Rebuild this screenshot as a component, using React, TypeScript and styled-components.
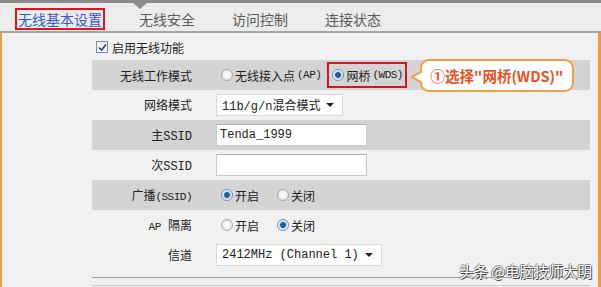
import React from 'react';
import styled, { createGlobalStyle } from 'styled-components';

const GlobalStyle = createGlobalStyle`
  html, body {
    margin: 0;
    padding: 0;
    background: #f1f1f1;
    overflow: hidden;
  }
`;

const Page = styled.div`
  position: relative;
  width: 601px;
  height: 287px;
  background: #f1f1f1;
  font-family: "Liberation Mono", "Noto Sans CJK SC", monospace;
  font-size: 12px;
  color: #222;
  overflow: hidden;
`;

const TopBar = styled.div`
  position: relative;
  height: 3px;
  background: #8c8c8c;

  &::after {
    content: '';
    position: absolute;
    left: 133px;
    top: 3px;
    border-left: 7px solid transparent;
    border-right: 7px solid transparent;
    border-top: 6px solid #8c8c8c;
  }
`;

const TabBar = styled.div`
  display: flex;
  align-items: center;
  gap: 31px;
  height: 28px;
  padding-left: 15px;
  background: #ececec;
  border-bottom: 2px solid #a6a6a6;
  font-family: "Noto Sans CJK SC", sans-serif;
  font-size: 14px;
`;

const Tab = styled.div<{ $active?: boolean }>`
  height: 18px;
  line-height: 18px;
  padding: 0 1px;
  margin-top: 3px;
  color: ${(p) => (p.$active ? '#3558d0' : '#5a5a5a')};
  border: 2px solid ${(p) => (p.$active ? '#e0141c' : 'transparent')};
`;

const Body = styled.div`
  height: 254px;
  border-left: 2px solid #e8a23a;
  border-right: 3px solid #ec9a3a;
  padding: 0 8px 0 90px;
`;

const CheckRow = styled.label`
  display: flex;
  align-items: center;
  gap: 4px;
  height: 27px;
  padding-left: 4px;
  padding-top: 1px;
  box-sizing: border-box;
  font-family: "Noto Sans CJK SC", sans-serif;
`;

const CheckBox = styled.span`
  display: inline-flex;
  align-items: center;
  justify-content: center;
  width: 10px;
  height: 10px;
  border: 1px solid #7d8ba5;
  background: linear-gradient(#e6eaf2, #ffffff);
`;

const Row = styled.div<{ $shade?: boolean }>`
  position: relative;
  display: grid;
  grid-template-columns: 100px 1fr;
  column-gap: 24px;
  align-items: center;
  height: 30px;
  background: ${(p) => (p.$shade ? '#d4d4d4' : 'transparent')};
`;

const Label = styled.div<{ $cjk?: boolean }>`
  text-align: right;
  white-space: nowrap;
  font-family: ${(p) => (p.$cjk ? '"Noto Sans CJK SC", sans-serif' : 'inherit')};
`;

const Small = styled.span`
  font-family: "Liberation Mono", monospace;
  font-size: 11px;
  letter-spacing: -0.5px;
`;

const Value = styled.div`
  display: flex;
  align-items: center;
`;

const Choice = styled.span<{ $gap?: number }>`
  display: inline-flex;
  align-items: center;
  gap: 2px;
  margin-left: ${(p) => p.$gap ?? 5}px;
  font-family: "Noto Sans CJK SC", sans-serif;
  white-space: nowrap;
`;

const Radio = styled.span<{ $checked?: boolean }>`
  box-sizing: border-box;
  width: 12px;
  height: 12px;
  border-radius: 50%;
  border: 1px solid ${(p) => (p.$checked ? '#6f8fb0' : '#a9a9a9')};
  background: ${(p) =>
    p.$checked
      ? 'radial-gradient(circle, #1c5f9e 0 2.5px, #7fb0dc 3px, #eaf2fa 4px)'
      : 'radial-gradient(circle, #fbfbfb 0 2px, #e4e4e4 5px)'};
`;

const Marked = styled.span`
  display: inline-flex;
  align-items: center;
  gap: 2px;
  height: 22px;
  padding: 0 2px 0 3px;
  margin-left: 6px;
  border: 2px solid #d8141c;
  font-family: "Noto Sans CJK SC", sans-serif;
  white-space: nowrap;
`;

const Callout = styled.div`
  position: relative;
  margin: -4px 0 -4px 13px;
  height: 33px;
  width: 154px;
  box-sizing: border-box;
  display: flex;
  align-items: center;
  justify-content: center;
  border: 2px solid #f0a040;
  border-radius: 9px;
  background: #fff;
  color: #e8521e;
  font-family: "Noto Sans CJK SC", sans-serif;
  font-weight: 700;
  font-size: 14.5px;
  white-space: nowrap;

  &::before {
    content: '';
    position: absolute;
    left: -12px;
    top: 9px;
    border-top: 7px solid transparent;
    border-bottom: 7px solid transparent;
    border-right: 12px solid #f0a040;
  }
  &::after {
    content: '';
    position: absolute;
    left: -8px;
    top: 11px;
    border-top: 5px solid transparent;
    border-bottom: 5px solid transparent;
    border-right: 9px solid #fff;
  }
`;

const Select = styled.div<{ $width: number }>`
  box-sizing: border-box;
  display: flex;
  align-items: center;
  justify-content: space-between;
  width: ${(p) => p.$width}px;
  height: 22px;
  padding: 0 8px 0 5px;
  background: #fff;
  border: 1px solid #d9d9d9;
  white-space: nowrap;

  &::after {
    content: '';
    border-left: 4px solid transparent;
    border-right: 4px solid transparent;
    border-top: 4px solid #222;
  }
`;

const Input = styled.div`
  box-sizing: border-box;
  width: 151px;
  height: 22px;
  line-height: 20px;
  padding: 0 3px;
  background: #fff;
  border: 1px solid #c8c8c8;
  border-top-color: #b0b0b0;
`;

const Divider = styled.div<{ $tone: string }>`
  margin-top: 7px;
  height: 1px;
  background: ${(p) => p.$tone};
`;

const Watermark = styled.div`
  position: absolute;
  right: 9px;
  bottom: 6px;
  font-family: "Noto Sans CJK SC", sans-serif;
  font-size: 14.5px;
  color: #fff;
  text-shadow: 1px 1px 0 #444, -1px 0 0 #777, 0 -1px 0 #888;
  white-space: nowrap;
`;

const Check = () => (
  <svg width="9" height="9" viewBox="0 0 9 9">
    <path d="M1 4.5 L3.5 7 L8 1.5" fill="none" stroke="#2a3f7a" strokeWidth="1.6" />
  </svg>
);

export default function App() {
  return (
    <Page>
      <GlobalStyle />
      <TopBar />
      <TabBar>
        <Tab $active>无线基本设置</Tab>
        <Tab>无线安全</Tab>
        <Tab>访问控制</Tab>
        <Tab>连接状态</Tab>
      </TabBar>
      <Body>
        <CheckRow>
          <CheckBox>
            <Check />
          </CheckBox>
          启用无线功能
        </CheckRow>
        <Row $shade>
          <Label $cjk>无线工作模式</Label>
          <Value>
            <Choice>
              <Radio />
              无线接入点<Small>(AP)</Small>
            </Choice>
            <Marked>
              <Radio $checked />
              网桥<Small>(WDS)</Small>
            </Marked>
            <Callout>①选择"网桥(WDS)"</Callout>
          </Value>
        </Row>
        <Row>
          <Label>网络模式</Label>
          <Value>
            <Select $width={127}>11b/g/n混合模式</Select>
          </Value>
        </Row>
        <Row $shade>
          <Label>主SSID</Label>
          <Value>
            <Input>Tenda_1999</Input>
          </Value>
        </Row>
        <Row>
          <Label>次SSID</Label>
          <Value>
            <Input />
          </Value>
        </Row>
        <Row $shade>
          <Label>
            广播<Small>(SSID)</Small>
          </Label>
          <Value>
            <Choice>
              <Radio $checked />
              开启
            </Choice>
            <Choice $gap={18}>
              <Radio />
              关闭
            </Choice>
          </Value>
        </Row>
        <Row>
          <Label>
            <Small>AP</Small> 隔离
          </Label>
          <Value>
            <Choice>
              <Radio />
              开启
            </Choice>
            <Choice $gap={18}>
              <Radio $checked />
              关闭
            </Choice>
          </Value>
        </Row>
        <Row>
          <Label>信道</Label>
          <Value>
            <Select $width={166}>2412MHz (Channel 1)</Select>
          </Value>
        </Row>
        <Divider $tone="#9e9e9e" />
        <Divider $tone="#c9c9c9" />
      </Body>
      <Watermark>头条 @电脑技师大明</Watermark>
    </Page>
  );
}
